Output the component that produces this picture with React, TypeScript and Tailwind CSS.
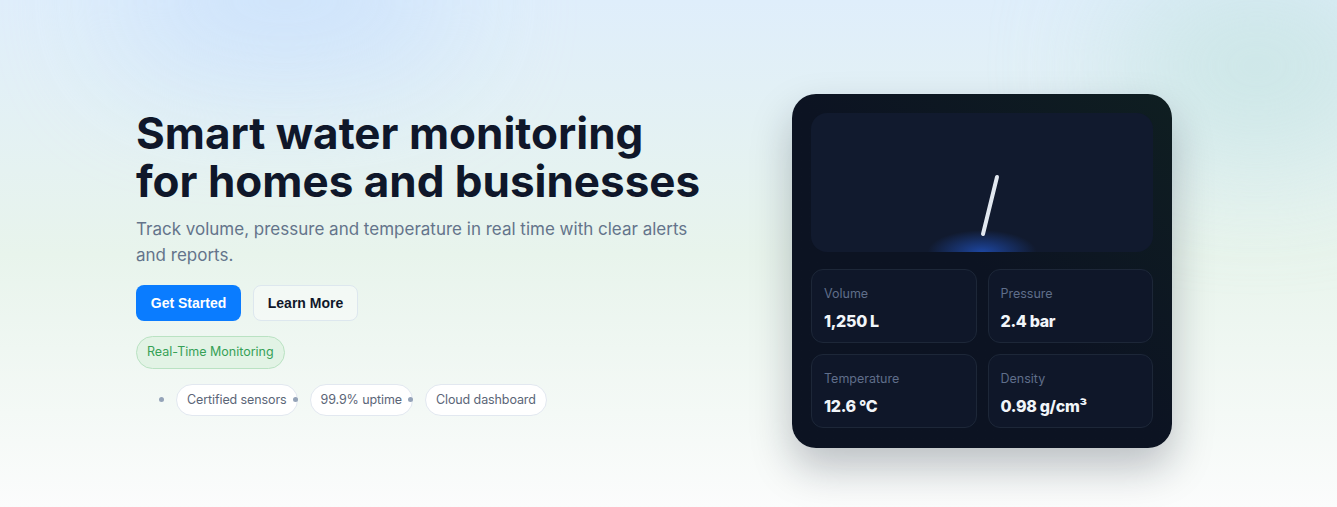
import React from "react";

const stats = [
  { label: "Volume", value: "1,250 L" },
  { label: "Pressure", value: "2.4 bar" },
  { label: "Temperature", value: "12.6 °C" },
  { label: "Density", value: "0.98 g/cm³" },
];

const badges = ["Certified sensors", "99.9% uptime", "Cloud dashboard"];

export default function App() {
  return (
    <main className="relative h-[507px] w-full overflow-hidden bg-gradient-to-b from-[#dfeefb] via-[#e8f4ec] to-[#fbfcfc] font-['Inter',sans-serif]">
      {/* blurred background blobs */}
      <div className="pointer-events-none absolute -top-16 left-[120px] h-[130px] w-[330px] rounded-full bg-[#c9e0fc] opacity-90 blur-3xl" />
      <div className="pointer-events-none absolute -top-6 right-[-60px] h-[180px] w-[280px] rounded-full bg-[#c6e4e2] opacity-80 blur-3xl" />

      <div className="relative flex h-full items-center justify-between pl-[136px] pr-[165px] pt-[18px]">
        {/* Left column */}
        <section className="flex w-[580px] flex-col">
          <h1 className="text-[44px] font-bold leading-[48px] text-[#0f172a]">
            Smart water monitoring
            <br />
            for homes and businesses
          </h1>
          <p className="mt-[11px] text-[17px] leading-[26px] text-[#64748b]">
            Track volume, pressure and temperature in real time with clear alerts
            and reports.
          </p>

          <div className="mt-[17px] flex gap-3 font-['Liberation_Sans',sans-serif]">
            <button className="h-9 w-[105px] rounded-lg bg-[#0a7cff] text-[14px] font-bold text-white">
              Get Started
            </button>
            <button className="h-9 w-[105px] rounded-lg border border-[#dde7ee] bg-white/40 text-[14px] font-bold text-[#0f172a]">
              Learn More
            </button>
          </div>

          <div className="mt-[15px]">
            <span className="inline-flex h-[33px] items-center rounded-full border border-[#b9e2c2] bg-[#e2f3e5] px-[10px] text-[12.5px] text-[#36a157]">
              Real-Time Monitoring
            </span>
          </div>

          <ul className="mt-[15px] flex list-disc gap-3 pl-10 text-[#94a3b8]">
            {badges.map((b) => (
              <li key={b}>
                <span className="flex h-8 items-center rounded-full border border-[#e2e8f0] bg-white px-[10px] text-[12.5px] tracking-[-0.1px] text-[#5b6577]">
                  {b}
                </span>
              </li>
            ))}
          </ul>
        </section>

        {/* Right card */}
        <section className="mt-4 w-[380px] rounded-3xl bg-gradient-to-bl from-[#0f1e21] via-[#0c1322] to-[#0c1322] px-[19px] pb-5 pt-[19px] shadow-[0_20px_40px_rgba(15,23,42,0.25)]">
          <div className="relative h-[139px] overflow-hidden rounded-2xl bg-[#111a2e]">
            <div className="absolute bottom-[-22px] left-1/2 h-[44px] w-[110px] -translate-x-1/2 rounded-full bg-[radial-gradient(ellipse_at_center,rgba(37,99,235,0.6),rgba(37,99,235,0)_70%)]" />
            <svg className="absolute inset-0" width="342" height="139" viewBox="0 0 342 139">
              <line x1="172" y1="121" x2="186" y2="64" stroke="#e2e8f0" strokeWidth="4" strokeLinecap="round" />
            </svg>
          </div>

          <div className="mt-[17px] grid grid-cols-2 gap-[11px]">
            {stats.map((s) => (
              <div key={s.label} className="h-[74px] rounded-xl border border-[#1d2738] bg-[#0f1729] px-[12px] pt-[16px]">
                <div className="text-[12.5px] leading-4 text-[#5f6e8a]">{s.label}</div>
                <div className="mt-[9px] text-[16px] font-extrabold leading-5 tracking-[-0.3px] text-[#f1f5f9]">
                  {s.value}
                </div>
              </div>
            ))}
          </div>
        </section>
      </div>
    </main>
  );
}
